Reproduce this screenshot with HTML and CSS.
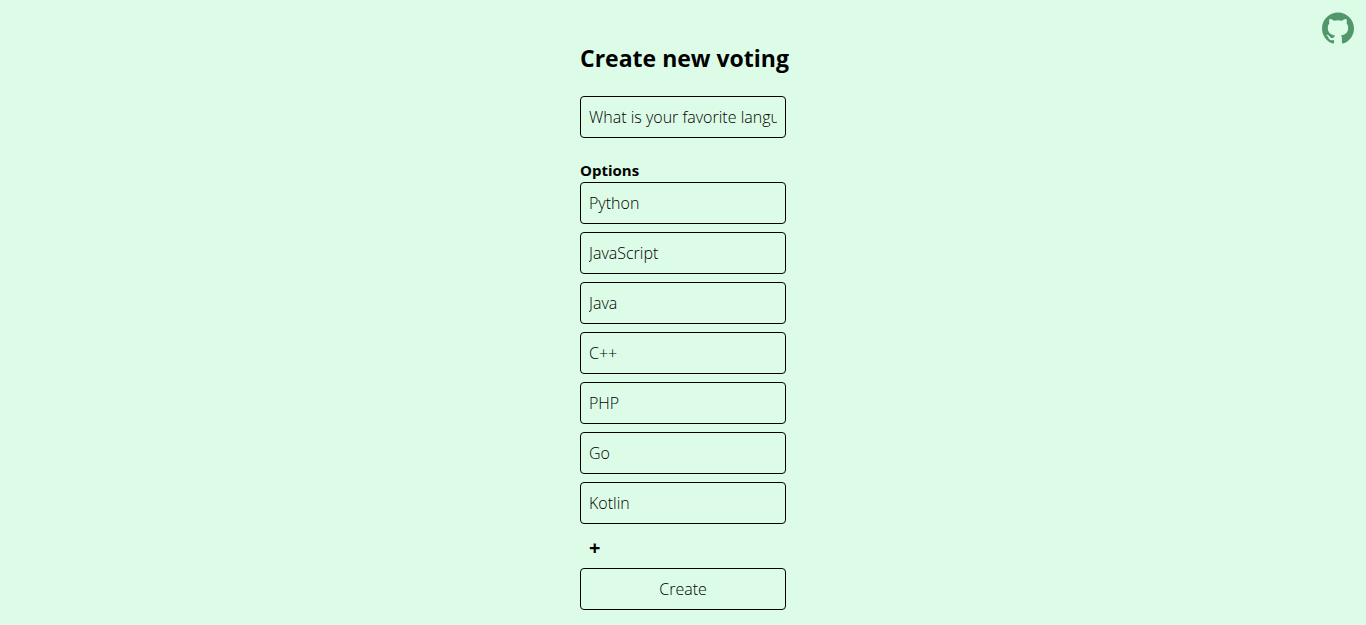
FILE: index.html
```html
<!DOCTYPE html>
<html lang="en">
<head>
<meta charset="utf-8">
<meta name="viewport" content="width=device-width, initial-scale=1">
<title>Create new voting</title>
<link rel="stylesheet" href="styles.css">
</head>
<body>
<a class="repo-link" href="#" aria-label="GitHub repository">
<svg class="repo-icon" viewBox="0 0 24 24" aria-hidden="true"><path d="M12 .297c-6.63 0-12 5.373-12 12 0 5.303 3.438 9.8 8.205 11.385.6.113.82-.258.82-.577 0-.285-.01-1.04-.015-2.04-3.338.724-4.042-1.61-4.042-1.61C4.422 18.07 3.633 17.7 3.633 17.7c-1.087-.744.084-.729.084-.729 1.205.084 1.838 1.236 1.838 1.236 1.07 1.835 2.809 1.305 3.495.998.108-.776.417-1.305.76-1.605-2.665-.3-5.466-1.332-5.466-5.93 0-1.31.465-2.38 1.235-3.22-.135-.303-.54-1.523.105-3.176 0 0 1.005-.322 3.3 1.23.96-.267 1.98-.399 3-.405 1.02.006 2.04.138 3 .405 2.28-1.552 3.285-1.23 3.285-1.23.645 1.653.24 2.873.12 3.176.765.84 1.23 1.91 1.23 3.22 0 4.61-2.805 5.625-5.475 5.92.42.36.81 1.096.81 2.22 0 1.606-.015 2.896-.015 3.286 0 .315.21.69.825.57C20.565 22.092 24 17.592 24 12.297c0-6.627-5.373-12-12-12"/></svg>
</a>
<main class="page">
<form class="voting">
<h1 class="title">Create new voting</h1>
<input class="field" type="text" aria-label="Question" value="What is your favorite language?">
<fieldset class="options">
<legend class="options-title">Options</legend>
<div class="option-list">
<input class="field" type="text" aria-label="Option 1" value="Python">
<input class="field" type="text" aria-label="Option 2" value="JavaScript">
<input class="field" type="text" aria-label="Option 3" value="Java">
<input class="field" type="text" aria-label="Option 4" value="C++">
<input class="field" type="text" aria-label="Option 5" value="PHP">
<input class="field" type="text" aria-label="Option 6" value="Go">
<input class="field" type="text" aria-label="Option 7" value="Kotlin">
</div>
</fieldset>
<button class="add" type="button" aria-label="Add option">+</button>
<button class="field create" type="submit">Create</button>
</form>
</main>
</body>
</html>
```
FILE: styles.css
```css
*, *::before, *::after { box-sizing: border-box; }
body {
  margin: 0;
  background: #dcfce7;
  color: #000;
  font-family: "Segoe UI", "Open Sans", "Noto Sans", sans-serif;
  font-size: 15px;
  line-height: 24px;
}
.repo-link {
  position: absolute;
  top: 12px;
  right: 12px;
}
.repo-icon {
  display: block;
  width: 32px;
  height: 32px;
  fill: #52976c;
}
.page {
  display: flex;
  justify-content: center;
  padding: 42px 16px 15px;
}
.voting {
  display: flex;
  flex-direction: column;
  align-items: stretch;
  width: 206px;
}
.title {
  margin: 0 0 22px;
  font-size: 23px;
  line-height: 32px;
  font-weight: 700;
  white-space: nowrap;
}
.field {
  width: 100%;
  margin: 0;
  padding: 8px;
  border: 1px solid #000;
  border-radius: 4px;
  background: transparent;
  color: inherit;
  font: inherit;
  font-size: 16px;
  font-weight: 300;
}
.options {
  min-width: 0;
  margin: 20px 0 0;
  padding: 0;
  border: 0;
}
.options-title {
  padding: 0;
  font-weight: 700;
}
.option-list {
  display: flex;
  flex-direction: column;
  gap: 8px;
}
.add {
  align-self: flex-start;
  margin: 12px 0 8px;
  padding: 0 9px;
  border: 0;
  background: transparent;
  color: inherit;
  font: inherit;
  font-size: 20px;
  font-weight: 700;
  line-height: 24px;
}
```
